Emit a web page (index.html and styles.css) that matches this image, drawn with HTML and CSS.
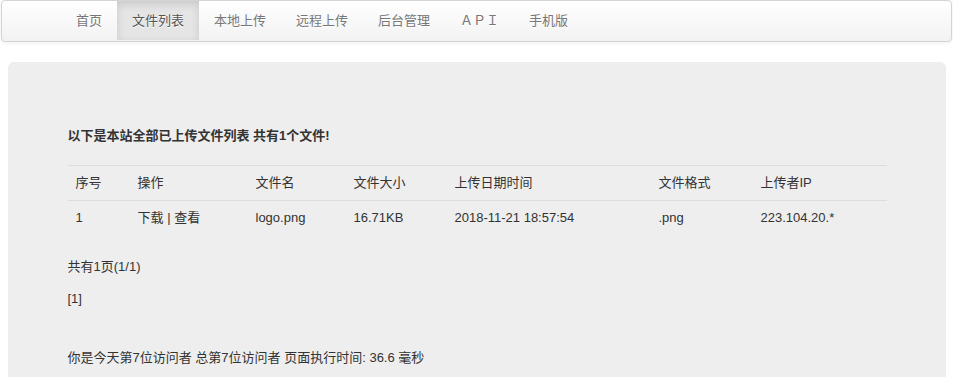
FILE: index.html
```html
<!DOCTYPE html>
<html lang="zh-CN">
<head>
    <meta charset="UTF-8">
    <title>文件列表</title>
    <link rel="stylesheet" href="styles.css">
</head>
<body>
    <div class="navbar">
        <ul class="nav">
            <li><a href="#">首页</a></li>
            <li class="active"><a href="#">文件列表</a></li>
            <li><a href="#">本地上传</a></li>
            <li><a href="#">远程上传</a></li>
            <li><a href="#">后台管理</a></li>
            <li><a href="#">ＡＰＩ</a></li>
            <li><a href="#">手机版</a></li>
        </ul>
    </div>

    <div class="container">
        <div class="hero-unit">
            <p class="title">以下是本站全部已上传文件列表 共有1个文件!</p>

            <table class="table">
                <colgroup>
                    <col style="width: 62px">
                    <col style="width: 118px">
                    <col style="width: 98px">
                    <col style="width: 101px">
                    <col style="width: 204px">
                    <col style="width: 102px">
                    <col style="width: 134px">
                </colgroup>
                <tr>
                    <td>序号</td>
                    <td>操作</td>
                    <td>文件名</td>
                    <td>文件大小</td>
                    <td>上传日期时间</td>
                    <td>文件格式</td>
                    <td>上传者IP</td>
                </tr>
                <tr>
                    <td>1</td>
                    <td><a href="#">下载</a> | <a href="#">查看</a></td>
                    <td>logo.png</td>
                    <td>16.71KB</td>
                    <td>2018-11-21 18:57:54</td>
                    <td>.png</td>
                    <td>223.104.20.*</td>
                </tr>
            </table>

            <p class="pages">共有1页(1/1)</p>
            <p class="pager">[1]</p>

            <p class="footer">你是今天第7位访问者 总第7位访问者 页面执行时间: 36.6 毫秒</p>
        </div>
    </div>
</body>
</html>
```

FILE: styles.css
```css
body {
    margin: 0;
    font-family: "Liberation Sans", "Noto Sans CJK SC", sans-serif;
    font-size: 13px;
    line-height: 18px;
    color: #333;
    background-color: #fff;
}
a {
    color: #333;
    text-decoration: none;
}
.navbar {
    margin: 0 1px;
    padding-left: 59px;
    min-height: 40px;
    background-color: #fafafa;
    background-image: linear-gradient(to bottom, #ffffff, #f2f2f2);
    border: 1px solid #d4d4d4;
    border-radius: 4px;
    box-shadow: 0 1px 4px rgba(0,0,0,0.065);
}
.nav {
    display: flex;
    margin: 0;
    padding: 0;
    list-style: none;
}
.nav a {
    display: block;
    padding: 10px 15px;
    line-height: 19px;
    color: #777;
    text-shadow: 0 1px 0 #fff;
}
.nav .active a {
    color: #555;
    background-color: #e5e5e5;
    box-shadow: inset 0 3px 8px rgba(0,0,0,0.125);
}
.container {
    width: 938px;
    margin: 20px auto 0;
}
.hero-unit {
    padding: 60px;
    background-color: #eee;
    border-radius: 6px;
}
.title {
    margin: 1px 0 16px;
    line-height: 26px;
    font-weight: bold;
}
.table {
    width: 819px;
    margin-bottom: 23px;
    border-collapse: collapse;
    table-layout: fixed;
}
.table td {
    padding: 8px;
    line-height: 18px;
    text-align: left;
    vertical-align: top;
    border-top: 1px solid #ddd;
}
.pages {
    margin: 0 0 14px;
}
.pager {
    margin: 0 0 41px;
}
.footer {
    margin: 0;
}
```
